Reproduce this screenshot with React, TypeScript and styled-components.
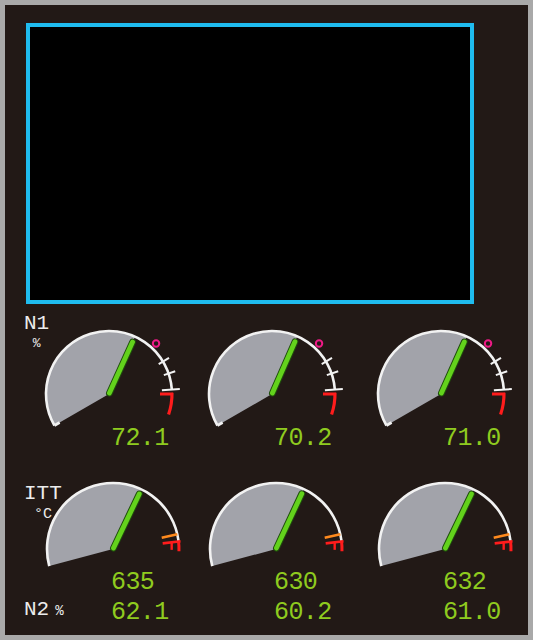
import React from 'react';
import styled, { createGlobalStyle } from 'styled-components';

const GlobalStyle = createGlobalStyle`
  html, body { margin: 0; padding: 0; background: #a9a9a9; }
  body { font-family: "Liberation Mono", "DejaVu Sans Mono", monospace; }
`;

const Frame = styled.div`
  box-sizing: border-box;
  width: 523px;
  height: 630px;
  margin: 5px 0 0 5px;
  padding: 18px 0 0 21px;
  background: #221916;
  display: flex;
  flex-direction: column;
`;

const Screen = styled.div`
  box-sizing: border-box;
  width: 448px;
  height: 281px;
  border: 4px solid #1fbcef;
  background: #000;
`;

const GaugeRow = styled.div<{ $top: number }>`
  display: grid;
  grid-template-columns: 163px 169px 170px;
  margin-top: ${(p) => p.$top}px;
`;

const Cell = styled.div`
  display: flex;
  flex-direction: column;
`;

const Stack = styled.div`
  display: grid;
  & > * {
    grid-area: 1 / 1;
  }
`;

const DialSvg = styled.svg`
  display: block;
  overflow: visible;
`;

const Caption = styled.div<{ $top: number }>`
  justify-self: start;
  align-self: start;
  margin: ${(p) => p.$top}px 0 0 -2px;
  display: flex;
  flex-direction: column;
  align-items: center;
  color: #ececec;
`;

const CaptionMain = styled.span`
  font-size: 21px;
  line-height: 24px;
`;

const CaptionUnit = styled.span<{ $size: number }>`
  font-size: ${(p) => p.$size}px;
  line-height: ${(p) => Math.ceil(p.$size * 1.14)}px;
`;

const InlineCaption = styled.div`
  justify-self: start;
  display: flex;
  align-items: baseline;
  gap: 6px;
  margin-left: -2px;
  line-height: 30px;
  color: #ececec;
`;

const Readout = styled.div`
  font-size: 25px;
  line-height: 30px;
  letter-spacing: -0.6px;
  color: #8fcb1f;
  padding-left: 85px;
  white-space: pre;
`;

type Pt = [number, number];
const pt = (cx: number, cy: number, r: number, a: number): Pt => {
  const t = (a * Math.PI) / 180;
  return [cx + r * Math.sin(t), cy - r * Math.cos(t)];
};
const arcPath = (cx: number, cy: number, r: number, a0: number, a1: number) => {
  const [x0, y0] = pt(cx, cy, r, a0);
  const [x1, y1] = pt(cx, cy, r, a1);
  const large = a1 - a0 > 180 ? 1 : 0;
  return `M${x0.toFixed(2)} ${y0.toFixed(2)} A${r} ${r} 0 ${large} 1 ${x1.toFixed(2)} ${y1.toFixed(2)}`;
};
const sectorPath = (cx: number, cy: number, r: number, a0: number, a1: number) => {
  const [x0, y0] = pt(cx, cy, r, a0);
  const [x1, y1] = pt(cx, cy, r, a1);
  const large = a1 - a0 > 180 ? 1 : 0;
  return `M${cx} ${cy} L${x0.toFixed(2)} ${y0.toFixed(2)} A${r} ${r} 0 ${large} 1 ${x1.toFixed(2)} ${y1.toFixed(2)} Z`;
};

const Radial: React.FC<{ cx: number; cy: number; a: number; r0: number; r1: number; color: string; w: number }> = ({
  cx,
  cy,
  a,
  r0,
  r1,
  color,
  w,
}) => {
  const [x0, y0] = pt(cx, cy, r0, a);
  const [x1, y1] = pt(cx, cy, r1, a);
  return <line x1={x0} y1={y0} x2={x1} y2={y1} stroke={color} strokeWidth={w} />;
};

const Needle: React.FC<{ cx: number; cy: number; a: number; len: number }> = ({ cx, cy, a, len }) => {
  const [x0, y0] = pt(cx, cy, 1, a);
  const [x1, y1] = pt(cx, cy, len, a);
  return (
    <g strokeLinecap="round">
      <line x1={x0} y1={y0} x2={x1} y2={y1} stroke="#1f4d0c" strokeWidth={6.8} />
      <line x1={x0} y1={y0} x2={x1} y2={y1} stroke="#63d21c" strokeWidth={4.8} />
    </g>
  );
};

const WHITE = '#f2f2f2';
const RED = '#ff1c1c';
const GREY = '#a2a3aa';

const N1Dial: React.FC<{ w: number; cx: number; needle: number }> = ({ w, cx, needle }) => {
  const cy = 84;
  const r = 63;
  const [mx, my] = pt(cx, cy, 69, 43);
  return (
    <DialSvg width={w} height={114} viewBox={`0 0 ${w} 114`}>
      <path d={sectorPath(cx, cy, r, -120, needle)} fill={GREY} />
      <path d={arcPath(cx, cy, r, -120, 86)} fill="none" stroke={WHITE} strokeWidth={2.6} />
      <Radial cx={cx} cy={cy} a={-120} r0={57} r1={63} color={WHITE} w={2.6} />
      <Radial cx={cx} cy={cy} a={59} r0={58} r1={70} color={WHITE} w={2} />
      <Radial cx={cx} cy={cy} a={71} r0={58} r1={70} color={WHITE} w={2} />
      <Radial cx={cx} cy={cy} a={86} r0={53} r1={71} color={WHITE} w={2} />
      <path d={arcPath(cx, cy, r, 89, 109)} fill="none" stroke={RED} strokeWidth={3.2} />
      <Radial cx={cx} cy={cy} a={90} r0={51} r1={64} color={RED} w={3} />
      <circle cx={mx} cy={my} r={3.2} fill="none" stroke="#ee1a86" strokeWidth={2} />
      <Needle cx={cx} cy={cy} a={needle} len={57} />
    </DialSvg>
  );
};

const IttDial: React.FC<{ w: number; cx: number; needle: number }> = ({ w, cx, needle }) => {
  const cy = 71;
  const r = 66;
  const [lx, ly] = pt(cx, cy, 59, 84);
  return (
    <DialSvg width={w} height={90} viewBox={`0 0 ${w} 90`}>
      <path d={sectorPath(cx, cy, r, -105, needle)} fill={GREY} />
      <path d={arcPath(cx, cy, r, -105, 83)} fill="none" stroke={WHITE} strokeWidth={2.6} />
      <Radial cx={cx} cy={cy} a={77} r0={50} r1={66} color="#ff8a1e" w={2.6} />
      <Radial cx={cx} cy={cy} a={83.5} r0={50} r1={68} color={RED} w={2.6} />
      <path d={arcPath(cx, cy, r, 83, 92)} fill="none" stroke={RED} strokeWidth={3} />
      <line x1={lx} y1={ly} x2={lx} y2={ly + 7} stroke={RED} strokeWidth={2.4} />
      <Needle cx={cx} cy={cy} a={needle} len={61} />
    </DialSvg>
  );
};

const COLS = [163, 169, 170];

const n1 = [
  { v: '72.1', a: 24.4 },
  { v: '70.2', a: 23.7 },
  { v: '71.0', a: 24.1 },
];
const itt = [
  { t: '635', n2: '62.1', a: 25.5 },
  { t: '630', n2: '60.2', a: 25 },
  { t: '632', n2: '61.0', a: 25.7 },
];

export default function App() {
  return (
    <>
      <GlobalStyle />
      <Frame>
        <Screen />
        <GaugeRow $top={6}>
          {n1.map((g, i) => (
            <Cell key={i}>
              <Stack>
                <N1Dial w={COLS[i]} cx={83} needle={g.a} />
                {i === 0 && (
                  <Caption $top={2}>
                    <CaptionMain>N1</CaptionMain>
                    <CaptionUnit $size={13}>%</CaptionUnit>
                  </Caption>
                )}
              </Stack>
              <Readout>{g.v}</Readout>
            </Cell>
          ))}
        </GaugeRow>
        <GaugeRow $top={24}>
          {itt.map((g, i) => (
            <Cell key={i}>
              <Stack>
                <IttDial w={COLS[i]} cx={87} needle={g.a} />
                {i === 0 && (
                  <Caption $top={4}>
                    <CaptionMain>ITT</CaptionMain>
                    <CaptionUnit $size={15}>°C</CaptionUnit>
                  </Caption>
                )}
              </Stack>
              <Readout>{g.t}</Readout>
              <Stack>
                {i === 0 && (
                  <InlineCaption>
                    <CaptionMain>N2</CaptionMain>
                    <CaptionUnit $size={14}>%</CaptionUnit>
                  </InlineCaption>
                )}
                <Readout>{g.n2}</Readout>
              </Stack>
            </Cell>
          ))}
        </GaugeRow>
      </Frame>
    </>
  );
}
